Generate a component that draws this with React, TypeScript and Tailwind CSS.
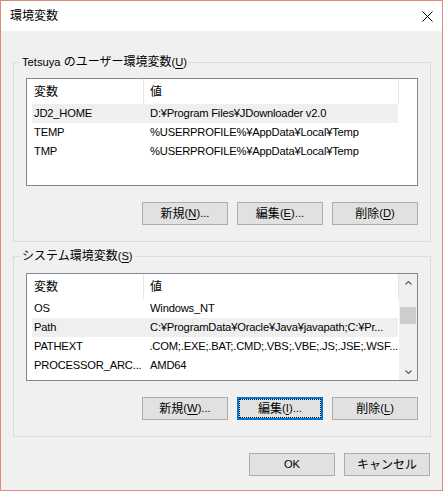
import React from 'react';

type Row = { name: string; value: string; hot?: boolean };

const userVars: Row[] = [
  { name: 'JD2_HOME', value: 'D:¥Program Files¥JDownloader v2.0', hot: true },
  { name: 'TEMP', value: '%USERPROFILE%¥AppData¥Local¥Temp' },
  { name: 'TMP', value: '%USERPROFILE%¥AppData¥Local¥Temp' },
];

const systemVars: Row[] = [
  { name: 'OS', value: 'Windows_NT' },
  { name: 'Path', value: 'C:¥ProgramData¥Oracle¥Java¥javapath;C:¥Pr...', hot: true },
  { name: 'PATHEXT', value: '.COM;.EXE;.BAT;.CMD;.VBS;.VBE;.JS;.JSE;.WSF...' },
  { name: 'PROCESSOR_ARC...', value: 'AMD64' },
];

// 日本語部分だけ少し大きく
const J = ({ children }: { children: React.ReactNode }) => (
  <span className="text-[12px]">{children}</span>
);

const Key = ({ k }: { k: string }) => (
  <>
    (<span className="underline underline-offset-[2px]">{k}</span>)
  </>
);

const Btn = ({ label, k, dots = true, focused = false }: { label: string; k: string; dots?: boolean; focused?: boolean }) => (
  <button
    className={
      focused
        ? 'w-[86px] h-[23px] bg-[#e1e1e1] border-2 border-[#0078d7] flex items-stretch p-0'
        : 'w-[86px] h-[23px] bg-[#e1e1e1] border border-[#adadad] flex items-center justify-center'
    }
  >
    {focused ? (
      <span className="flex-1 flex items-center justify-center border border-dotted border-black">
        <J>{label}</J>
        <Key k={k} />
        {dots && '...'}
      </span>
    ) : (
      <span className="flex items-center">
        <J>{label}</J>
        <Key k={k} />
        {dots && '...'}
      </span>
    )}
  </button>
);

const ScrollBar = () => (
  <div className="flex-1 bg-[#f0f0f0] flex flex-col">
    <div className="h-[17px] flex items-center justify-center">
      <svg width="7" height="4" viewBox="0 0 7 4">
        <polyline points="0.5,3.5 3.5,0.5 6.5,3.5" fill="none" stroke="#606060" strokeWidth="1.2" />
      </svg>
    </div>
    <div className="flex-1 flex flex-col">
      <div className="mt-[16px] mx-[1px] h-[17px] bg-[#cdcdcd]" />
    </div>
    <div className="h-[17px] flex items-center justify-center">
      <svg width="7" height="4" viewBox="0 0 7 4">
        <polyline points="0.5,0.5 3.5,3.5 6.5,0.5" fill="none" stroke="#606060" strokeWidth="1.2" />
      </svg>
    </div>
  </div>
);

const VarList = ({ rows, scroll }: { rows: Row[]; scroll?: boolean }) => (
  <div className="w-[392px] h-[108px] border border-[#828790] bg-white flex">
    <div className="w-[372px] flex flex-col">
      <div className="h-[25px] flex">
        <div className="w-[117px] border-r border-[#e5e5e5] pl-[7px] flex items-center">
          <J>変数</J>
        </div>
        <div className="w-[255px] border-r border-[#e5e5e5] pl-[6px] flex items-center">
          <J>値</J>
        </div>
      </div>
      {rows.map((r, i) => (
        <div key={i} className={`ml-[5px] w-[366px] h-[19px] flex items-center ${r.hot ? 'bg-[#efefef]' : ''}`}>
          <div className="w-[112px] pl-[2px] whitespace-nowrap tracking-[-0.2px]">{r.name}</div>
          <div className="flex-1 pl-[6px] whitespace-nowrap tracking-[-0.2px]">{r.value}</div>
        </div>
      ))}
    </div>
    {scroll && <ScrollBar />}
  </div>
);

export default function App() {
  return (
    <div className="w-[443px] h-[491px] border border-[#d98c7c] flex flex-col font-['Liberation_Sans','Noto_Sans_CJK_JP',sans-serif] text-[11.2px] text-black">
      {/* タイトルバー */}
      <div className="h-[30px] bg-white flex items-center justify-between pl-[9px] pr-[9px]">
        <span className="text-[12px]">環境変数</span>
        <svg width="11" height="11" viewBox="0 0 11 11">
          <path d="M0.5 0.5 L10.5 10.5 M10.5 0.5 L0.5 10.5" stroke="#000" strokeWidth="1" />
        </svg>
      </div>

      <div className="flex-1 bg-[#f0f0f0] flex flex-col pl-[12px]">
        {/* ユーザー環境変数 */}
        <fieldset className="mt-[23px] w-[418px] border border-[#dcdcdc]">
          <legend className="ml-[6px] px-[2px] leading-[16px]">
            Tetsuya <J>のユーザー環境変数</J>
            <Key k="U" />
          </legend>
          <div className="px-[12px] pt-[8px] pb-[16px] flex flex-col">
            <VarList rows={userVars} />
            <div className="mt-[16px] flex justify-end gap-[9px]">
              <Btn label="新規" k="N" />
              <Btn label="編集" k="E" />
              <Btn label="削除" k="D" dots={false} />
            </div>
          </div>
        </fieldset>

        {/* システム環境変数 */}
        <fieldset className="mt-[6px] w-[418px] border border-[#dcdcdc]">
          <legend className="ml-[6px] px-[2px] leading-[16px]">
            <J>システム環境変数</J>
            <Key k="S" />
          </legend>
          <div className="px-[12px] pt-[9px] pb-[16px] flex flex-col">
            <VarList rows={systemVars} scroll />
            <div className="mt-[16px] flex justify-end gap-[9px]">
              <Btn label="新規" k="W" />
              <Btn label="編集" k="I" focused />
              <Btn label="削除" k="L" dots={false} />
            </div>
          </div>
        </fieldset>

        <div className="mt-[16px] w-[417px] flex justify-end gap-[9px]">
          <button className="w-[86px] h-[23px] bg-[#e1e1e1] border border-[#adadad]">OK</button>
          <button className="w-[86px] h-[23px] bg-[#e1e1e1] border border-[#adadad]">
            <J>キャンセル</J>
          </button>
        </div>
      </div>
    </div>
  );
}
